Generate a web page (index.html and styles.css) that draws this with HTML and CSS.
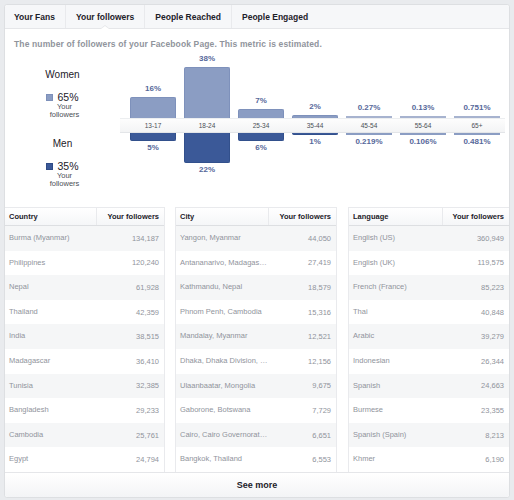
FILE: index.html
```html
<!DOCTYPE html>
<html>
<head>
<meta charset="utf-8">
<link rel="stylesheet" href="styles.css">
</head>
<body>
<div class="card">
  <div class="tabs">
    <div class="tab">Your Fans</div>
    <div class="tab active">Your followers</div>
    <div class="tab">People Reached</div>
    <div class="tab">People Engaged</div>
  </div>
  <div class="desc">The number of followers of your Facebook Page. This metric is estimated.</div>
  <div class="chart">
    <div class="legend">
      <div class="lg-group lg-women">
        <div class="lg-title">Women</div>
        <div class="lg-val"><span class="sw sw-women"></span>65%</div>
        <div class="lg-sub">Your<br>followers</div>
      </div>
      <div class="lg-group lg-men">
        <div class="lg-title">Men</div>
        <div class="lg-val"><span class="sw sw-men"></span>35%</div>
        <div class="lg-sub">Your<br>followers</div>
      </div>
    </div>
    <div class="plot">
      <div class="row row-top">
        <div class="col"><span class="val">16%</span><div class="bar bar-w" style="height:21px"></div></div>
        <div class="col"><span class="val">38%</span><div class="bar bar-w" style="height:51px"></div></div>
        <div class="col"><span class="val">7%</span><div class="bar bar-w" style="height:9px"></div></div>
        <div class="col"><span class="val">2%</span><div class="bar bar-w" style="height:3px"></div></div>
        <div class="col"><span class="val">0.27%</span><div class="bar bar-w bar-thin" style="height:2px"></div></div>
        <div class="col"><span class="val">0.13%</span><div class="bar bar-w bar-thin" style="height:2px"></div></div>
        <div class="col"><span class="val">0.751%</span><div class="bar bar-w bar-thin" style="height:2px"></div></div>
      </div>
      <div class="band">
        <span class="age">13-17</span>
        <span class="age">18-24</span>
        <span class="age">25-34</span>
        <span class="age">35-44</span>
        <span class="age">45-54</span>
        <span class="age">55-64</span>
        <span class="age">65+</span>
      </div>
      <div class="row row-bottom">
        <div class="col"><div class="bar bar-m" style="height:8px"></div><span class="val">5%</span></div>
        <div class="col"><div class="bar bar-m" style="height:30px"></div><span class="val">22%</span></div>
        <div class="col"><div class="bar bar-m" style="height:8px"></div><span class="val">6%</span></div>
        <div class="col"><div class="bar bar-m" style="height:2px"></div><span class="val">1%</span></div>
        <div class="col"><div class="bar bar-m bar-thin" style="height:2px"></div><span class="val">0.219%</span></div>
        <div class="col"><div class="bar bar-m bar-thin" style="height:2px"></div><span class="val">0.106%</span></div>
        <div class="col"><div class="bar bar-m bar-thin" style="height:2px"></div><span class="val">0.481%</span></div>
      </div>
    </div>
  </div>
  <div class="tables">
    <div class="tbl tbl-a">
      <div class="th"><span class="c1">Country</span><span class="c2">Your followers</span></div>
      <div class="tr"><span class="c1">Burma (Myanmar)</span><span class="c2">134,187</span></div>
      <div class="tr"><span class="c1">Philippines</span><span class="c2">120,240</span></div>
      <div class="tr"><span class="c1">Nepal</span><span class="c2">61,928</span></div>
      <div class="tr"><span class="c1">Thailand</span><span class="c2">42,359</span></div>
      <div class="tr"><span class="c1">India</span><span class="c2">38,515</span></div>
      <div class="tr"><span class="c1">Madagascar</span><span class="c2">36,410</span></div>
      <div class="tr"><span class="c1">Tunisia</span><span class="c2">32,385</span></div>
      <div class="tr"><span class="c1">Bangladesh</span><span class="c2">29,233</span></div>
      <div class="tr"><span class="c1">Cambodia</span><span class="c2">25,761</span></div>
      <div class="tr"><span class="c1">Egypt</span><span class="c2">24,794</span></div>
    </div>
    <div class="tbl tbl-b">
      <div class="th"><span class="c1">City</span><span class="c2">Your followers</span></div>
      <div class="tr"><span class="c1">Yangon, Myanmar</span><span class="c2">44,050</span></div>
      <div class="tr"><span class="c1">Antananarivo, Madagascar</span><span class="c2">27,419</span></div>
      <div class="tr"><span class="c1">Kathmandu, Nepal</span><span class="c2">18,579</span></div>
      <div class="tr"><span class="c1">Phnom Penh, Cambodia</span><span class="c2">15,316</span></div>
      <div class="tr"><span class="c1">Mandalay, Myanmar</span><span class="c2">12,521</span></div>
      <div class="tr"><span class="c1">Dhaka, Dhaka Division, Bangladesh</span><span class="c2">12,156</span></div>
      <div class="tr"><span class="c1">Ulaanbaatar, Mongolia</span><span class="c2">9,675</span></div>
      <div class="tr"><span class="c1">Gaborone, Botswana</span><span class="c2">7,729</span></div>
      <div class="tr"><span class="c1">Cairo, Cairo Governorate, Egypt</span><span class="c2">6,651</span></div>
      <div class="tr"><span class="c1">Bangkok, Thailand</span><span class="c2">6,553</span></div>
    </div>
    <div class="tbl tbl-c">
      <div class="th"><span class="c1">Language</span><span class="c2">Your followers</span></div>
      <div class="tr"><span class="c1">English (US)</span><span class="c2">360,949</span></div>
      <div class="tr"><span class="c1">English (UK)</span><span class="c2">119,575</span></div>
      <div class="tr"><span class="c1">French (France)</span><span class="c2">85,223</span></div>
      <div class="tr"><span class="c1">Thai</span><span class="c2">40,848</span></div>
      <div class="tr"><span class="c1">Arabic</span><span class="c2">39,279</span></div>
      <div class="tr"><span class="c1">Indonesian</span><span class="c2">26,344</span></div>
      <div class="tr"><span class="c1">Spanish</span><span class="c2">24,663</span></div>
      <div class="tr"><span class="c1">Burmese</span><span class="c2">23,355</span></div>
      <div class="tr"><span class="c1">Spanish (Spain)</span><span class="c2">8,213</span></div>
      <div class="tr"><span class="c1">Khmer</span><span class="c2">6,190</span></div>
    </div>
  </div>
  <div class="more">See more</div>
</div>
</body>
</html>
```
FILE: styles.css
```css
* { box-sizing: border-box; }
html, body { margin: 0; padding: 0; }
body {
  background: #e9ebee;
  font-family: "Liberation Sans", Arial, sans-serif;
  width: 514px;
  height: 500px;
  overflow: hidden;
}
.card {
  margin: 4px 0 0 4px;
  width: 506px;
  height: 494px;
  background: #fff;
  border: 1px solid #dddfe2;
  border-radius: 3px;
  display: flex;
  flex-direction: column;
}

/* tabs */
.tabs {
  height: 24px;
  flex: none;
  display: flex;
  align-items: stretch;
  background: #f6f7f9;
  border-bottom: 1px solid #e5e6e9;
  border-radius: 3px 3px 0 0;
}
.tab {
  position: relative;
  display: flex;
  align-items: center;
  padding: 0 10px;
  font-size: 8.5px;
  font-weight: bold;
  color: #1d2129;
  border-right: 1px solid #e9eaed;
}
.tab:first-child { padding-left: 9px; }
.tab:last-child { border-right: none; }
.tab.active::after {
  content: "";
  position: absolute;
  left: 50%;
  bottom: -1px;
  margin-left: -5px;
  width: 0;
  height: 0;
  border-left: 5px solid transparent;
  border-right: 5px solid transparent;
  border-bottom: 4px solid #e5e6e9;
}
.tab.active::before {
  content: "";
  position: absolute;
  left: 50%;
  bottom: -1px;
  margin-left: -4px;
  width: 0;
  height: 0;
  border-left: 4px solid transparent;
  border-right: 4px solid transparent;
  border-bottom: 3px solid #fff;
  z-index: 1;
}

/* description */
.desc {
  flex: none;
  height: 23px;
  padding: 9px 0 0 9px;
  font-size: 8.5px;
  line-height: 12px;
  font-weight: bold;
  color: #90949c;
  letter-spacing: 0.13px;
}

/* chart */
.chart {
  flex: none;
  height: 140px;
  display: flex;
}
.legend {
  width: 115px;
  flex: none;
  text-align: center;
}
.lg-group { display: flex; flex-direction: column; align-items: center; }
.lg-women { margin-top: 17px; }
.lg-men { margin-top: 20px; }
.lg-title {
  font-size: 10px;
  line-height: 12px;
  color: #1d2129;
  margin-bottom: 10px;
}
.lg-val {
  display: flex;
  align-items: center;
  font-size: 10.5px;
  line-height: 12px;
  color: #1d2129;
}
.sw {
  display: inline-block;
  width: 7px;
  height: 7px;
  margin-right: 4px;
}
.sw-women { background: #8b9dc3; border: 1px solid #7d90ba; }
.sw-men { background: #3b5998; border: 1px solid #2f4b86; }
.lg-sub {
  font-size: 7.5px;
  line-height: 7.5px;
  color: #4b4f56;
  margin-left: 4px;
}

.plot {
  width: 385px;
  flex: none;
  display: flex;
  flex-direction: column;
}
.row {
  display: flex;
  gap: 8px;
  padding-left: 10px;
}
.row-top { height: 66px; align-items: flex-end; }
.row-bottom { height: 59px; align-items: flex-start; }
.col {
  width: 46px;
  flex: none;
  display: flex;
  flex-direction: column;
  align-items: center;
}
.val {
  font-size: 8px;
  line-height: 12px;
  font-weight: bold;
  color: #56689a;
}
.row-top .val { margin-bottom: 2px; }
.row-bottom .val { margin-top: 1px; }
.bar { width: 100%; }
.bar-w {
  background: #8b9dc3;
  border: 1px solid #7e91bb;
  border-bottom: none;
  border-radius: 2px 2px 0 0;
}
.bar-m {
  background: #3b5998;
  border: 1px solid #32508c;
  border-top: none;
  border-radius: 0 0 2px 2px;
}
.bar-thin { border: none; border-radius: 0; }
.bar-w.bar-thin { background: #a7b3cf; }
.bar-m.bar-thin { background: #8b9dc3; }
.band {
  height: 15px;
  display: flex;
  gap: 8px;
  padding-left: 10px;
  background: linear-gradient(#fdfdfd, #f3f4f5);
  border-top: 1px solid #eceef0;
  border-bottom: 1px solid #e3e5e8;
}
.age {
  width: 46px;
  flex: none;
  text-align: center;
  font-size: 6.5px;
  line-height: 13px;
  color: #4b4f56;
}

/* tables */
.tables {
  flex: none;
  margin-top: 15px;
  height: 265px;
  display: flex;
}
.tbl { display: flex; flex-direction: column; }
.tbl-a { width: 160px; border-right: 1px solid #e9eaed; }
.tbl-b { width: 162px; margin-left: 10px; border-left: 1px solid #e9eaed; border-right: 1px solid #e9eaed; }
.tbl-c { width: 161px; margin-left: 11px; border-left: 1px solid #e9eaed; }
.th, .tr { display: grid; }
.tbl-a .th, .tbl-a .tr { grid-template-columns: 92px 1fr; }
.tbl-b .th, .tbl-b .tr { grid-template-columns: 93px 1fr; }
.tbl-c .th, .tbl-c .tr { grid-template-columns: 94px 1fr; }
.th {
  height: 19px;
  background: linear-gradient(#ffffff, #f5f6f8);
  border-top: 1px solid #e9eaed;
  border-bottom: 1px solid #dddfe2;
  font-size: 7.5px;
  font-weight: bold;
  color: #1d2129;
}
.th .c1 { border-right: 1px solid #e9eaed; }
.th span, .tr span {
  display: flex;
  align-items: center;
  min-width: 0;
}
.c1 { padding-left: 4px; }
.c2 { justify-content: flex-end; padding-right: 5px; }
.tr {
  height: 24.6px;
  font-size: 7.5px;
  color: #90949c;
}
.tr:nth-child(even) { background: #f5f6f7; }
.tr .c1 {
  display: block;
  line-height: 24.6px;
  white-space: nowrap;
  overflow: hidden;
  text-overflow: ellipsis;
}

/* see more */
.more {
  flex: 1;
  border-top: 1px solid #e5e6e9;
  background: linear-gradient(#ffffff, #f3f4f6);
  display: flex;
  align-items: center;
  justify-content: center;
  font-size: 9px;
  font-weight: bold;
  color: #1d2129;
  border-radius: 0 0 3px 3px;
}
```
